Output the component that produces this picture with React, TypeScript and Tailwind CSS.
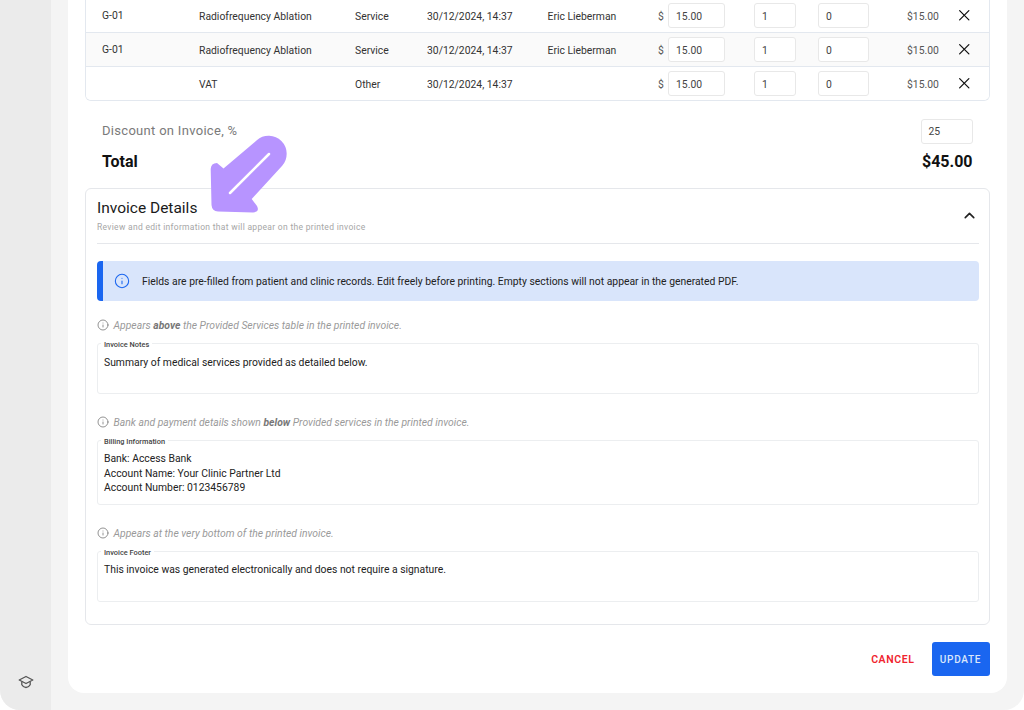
import React from "react";
import { X, ChevronUp, Info } from "lucide-react";

const rows = [
  { code: "G-01", name: "Radiofrequency Ablation", type: "Service", doctor: "Eric Lieberman", bg: "bg-white", h: "h-[34px] border-b border-[#e3e8ef]" },
  { code: "G-01", name: "Radiofrequency Ablation", type: "Service", doctor: "Eric Lieberman", bg: "bg-[#fafafa]", h: "h-[34px] border-b border-[#e3e8ef]" },
  { code: "", name: "VAT", type: "Other", doctor: "", bg: "bg-white", h: "h-[33px]" },
];

function Box({ value, className }: { value: string; className: string }) {
  return (
    <div className={`flex h-[25px] items-center rounded-[3px] border border-[#e8e8e8] bg-white pl-[7px] text-[10.36px] text-[#444] ${className}`}>
      <span className="translate-y-[1px]">{value}</span>
    </div>
  );
}

function Hint({ children }: { children: React.ReactNode }) {
  return (
    <div className="flex h-[14px] items-center gap-[4.5px] text-[10.36px] italic text-[#9a9a9a]">
      <Info size={12} strokeWidth={1.6} className="shrink-0 text-[#777]" />
      <span className="translate-y-[1px]">{children}</span>
    </div>
  );
}

function Field({ label, lines, height, className }: { label: string; lines: string[]; height: string; className: string }) {
  return (
    <div className={`relative rounded-[3px] border border-[#eceef0] px-[6px] ${height} ${className}`}>
      <span className="absolute -top-[4px] left-[3px] bg-white px-[3px] text-[7.4px] font-medium leading-[9px] text-[#444]">{label}</span>
      {lines.map((l) => (
        <div key={l} className="text-[10.36px] leading-[14.5px] text-[#222]">{l}</div>
      ))}
    </div>
  );
}

export default function App() {
  return (
    <div className="relative h-[710px] w-[1024px] overflow-hidden bg-white font-['Roboto',sans-serif]">
      <div className="flex h-full overflow-hidden rounded-b-[20px] bg-[#f4f4f4]">
        <aside className="flex w-[51px] shrink-0 flex-col items-center justify-end bg-[#ebebeb] pb-[20px]">
          <svg width="16" height="16" viewBox="0 0 16 16" fill="none" stroke="#555" strokeWidth="1.3" strokeLinejoin="round">
            <path d="M8 2.5 14.8 6 8 9.5 1.2 6Z" />
            <path d="M3.8 7.5v3.2C5 12.8 6.5 13.5 8 13.5s3-.7 4.2-2.8V7.5" />
          </svg>
        </aside>
        <main className="flex min-w-0 flex-1 flex-col px-[17px] pb-[17px]">
          <div className="flex flex-1 flex-col overflow-hidden rounded-b-[16px] bg-white pl-[17px] pr-[17.5px]">
            <div className="-mt-[1px] overflow-hidden rounded-b-[6px] border-x border-b border-[#e3e8ef]">
              {rows.map((r, i) => (
                <div key={i} className={`flex items-center pl-[16px] text-[10.36px] text-[#333] ${r.h} ${r.bg}`}>
                  <div className="w-[97px]">{r.code}</div>
                  <div className="w-[156px] translate-y-[1px]">{r.name}</div>
                  <div className="w-[72px] translate-y-[1px]">{r.type}</div>
                  <div className="w-[120.5px] translate-y-[1px]">30/12/2024, 14:37</div>
                  <div className="w-[110.5px] translate-y-[1px]">{r.doctor}</div>
                  <div className="w-[10px] translate-y-[1px] text-[#555]">$</div>
                  <Box value="15.00" className="w-[57px]" />
                  <div className="w-[29px]" />
                  <Box value="1" className="w-[42px]" />
                  <div className="w-[22px]" />
                  <Box value="0" className="w-[51px]" />
                  <div className="w-[38px]" />
                  <div className="w-[47.5px] translate-y-[1px] text-[#555]">$15.00</div>
                  <X size={18.5} strokeWidth={1.6} className="text-[#111]" />
                </div>
              ))}
            </div>

            <div className="mt-[17px] flex h-[26px] items-center justify-between pl-[17px] pr-[17px]">
              <span className="text-[13px] tracking-[0.3px] text-[#7a7a7a]">Discount on Invoice, %</span>
              <Box value="25" className="w-[52px]" />
            </div>
            <div className="mt-[6px] flex h-[24px] items-center justify-between pl-[17px] pr-[17px] text-[16px] font-bold text-[#111]">
              <span>Total</span>
              <span>$45.00</span>
            </div>

            <section className="mt-[14px] flex h-[437px] flex-col rounded-[6px] border border-[#e5e7eb] pl-[11px] pr-[10px]">
              <div className="flex h-[55px] items-start justify-between border-b border-[#e5e7eb] pt-[10px]">
                <div>
                  <div className="text-[15.5px] leading-[19px] text-[#1a1a1a]">Invoice Details</div>
                  <div className="mt-[3px] text-[8.5px] leading-[12px] tracking-[0.3px] text-[#a6a6a6]">Review and edit information that will appear on the printed invoice</div>
                </div>
                <ChevronUp size={17} strokeWidth={2.3} className="mr-[0.5px] mt-[8px] text-[#222]" />
              </div>

              <div className="mt-[17px] flex h-[40px] items-center rounded-[4px] border-l-[6px] border-[#1a66f0] bg-[#d9e5fb] pl-[11px] text-[10.36px] text-[#222]">
                <Info size={16} strokeWidth={1.6} className="mr-[12px] text-[#1a66f0]" />
                <span className="translate-y-[1px]">Fields are pre-filled from patient and clinic records. Edit freely before printing. Empty sections will not appear in the generated PDF.</span>
              </div>

              <div className="mt-[17px]">
                <Hint>Appears <b className="font-bold text-[#777]">above</b> the Provided Services table in the printed invoice.</Hint>
              </div>
              <Field label="Invoice Notes" lines={["Summary of medical services provided as detailed below."]} height="h-[51px]" className="mt-[11px] pt-[12px]" />

              <div className="mt-[21px]">
                <Hint>Bank and payment details shown <b className="font-bold text-[#777]">below</b> Provided services in the printed invoice.</Hint>
              </div>
              <Field label="Billing Information" lines={["Bank: Access Bank", "Account Name: Your Clinic Partner Ltd", "Account Number: 0123456789"]} height="h-[65px]" className="mt-[11px] pt-[11px]" />

              <div className="mt-[21px]">
                <Hint>Appears at the very bottom of the printed invoice.</Hint>
              </div>
              <Field label="Invoice Footer" lines={["This invoice was generated electronically and does not require a signature."]} height="h-[51px]" className="mt-[11px] pt-[11px]" />
            </section>

            <div className="mt-[17px] flex items-center justify-end gap-[17px]">
              <button className="translate-y-[1px] text-[10.5px] font-semibold tracking-[0.6px] text-[#f0242f]">CANCEL</button>
              <button className="h-[34px] w-[58px] rounded-[3px] bg-[#1a66f0] text-[10px] font-medium tracking-[0.7px] text-[#dbe6fb]">UPDATE</button>
            </div>
          </div>
        </main>
      </div>

      <svg viewBox="205 130 90 90" width="90" height="90" className="pointer-events-none absolute left-[205px] top-[130px]">
        <path
          d="M256.8 140.3 L223.5 168.5 L217 163 Q211 163 210.7 169 L211.5 205 Q212 211 218 211.5 L253 212.5 Q260 212 257 206 L251.7 199 L282.2 165.7 A18 18 0 0 0 256.8 140.3 Z"
          fill="#b794ff"
        />
        <path d="M269 154 L230 193" stroke="#fff" strokeWidth="2.5" strokeLinecap="round" />
      </svg>
    </div>
  );
}
